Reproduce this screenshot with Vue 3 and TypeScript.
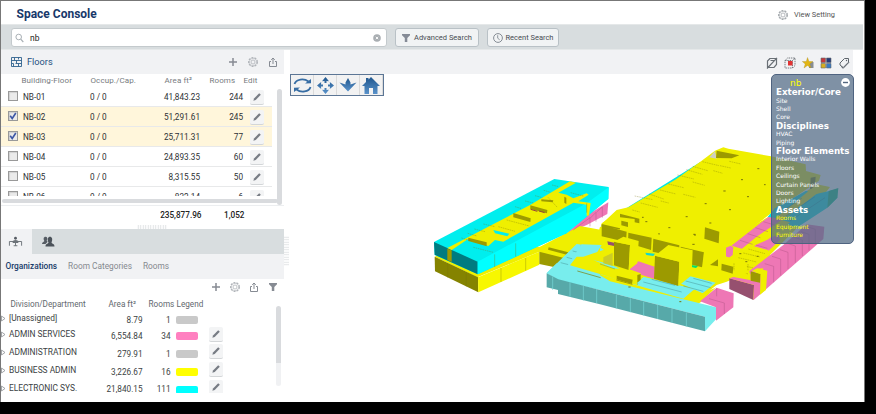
<script setup lang="ts">
interface Floor { name: string; area: string; rooms: string; checked: boolean }
interface Dept { name: string; area: string; rooms: string; color: string; edit: boolean }

const floors: Floor[] = [
  { name: 'NB-01', area: '41,843.23', rooms: '244', checked: false },
  { name: 'NB-02', area: '51,291.61', rooms: '245', checked: true },
  { name: 'NB-03', area: '25,711.31', rooms: '77', checked: true },
  { name: 'NB-04', area: '24,893.35', rooms: '60', checked: false },
  { name: 'NB-05', area: '8,315.55', rooms: '50', checked: false },
  { name: 'NB-06', area: '832.14', rooms: '6', checked: false },
]

const depts: Dept[] = [
  { name: '[Unassigned]', area: '8.79', rooms: '1', color: '#c9c9c9', edit: false },
  { name: 'ADMIN SERVICES', area: '6,554.84', rooms: '34', color: '#ff80c0', edit: true },
  { name: 'ADMINISTRATION', area: '279.91', rooms: '1', color: '#c9c9c9', edit: true },
  { name: 'BUSINESS ADMIN', area: '3,226.67', rooms: '16', color: '#ffff00', edit: true },
  { name: 'ELECTRONIC SYS.', area: '21,840.15', rooms: '111', color: '#00ffff', edit: true },
]

const layers = [
  { title: 'Exterior/Core', items: ['Site', 'Shell', 'Core'], on: false },
  { title: 'Disciplines', items: ['HVAC', 'Piping'], on: false },
  { title: 'Floor Elements', items: ['Interior Walls', 'Floors', 'Ceilings', 'Curtain Panels', 'Doors', 'Lighting'], on: false },
  { title: 'Assets', items: ['Rooms', 'Equipment', 'Furniture'], on: true },
]

// Shapes are listed back to front as [fill, points].
type Shape = [string, string]
const Y = '#efef00', YD = '#9c9a00', P = '#ee77b5', PD = '#96506f', C = '#78eded', CD = '#57a9a9'

const mainBlock: Shape[] = [
  ['#00e5e5', '80,234 300,97 305,110 120,230'],
  [Y, '5,282 50,240 85,232 228,148 305,92 345,62 370,52 385,56 513,79 617,103 618,123 662,135 657,152 513,250 410,330 400,400 100,380 5,310'],
  ['#cfcfc0', '328,82 345,63 350,86'],
  [YD, '350,62 418,76 395,85 348,84'],
  [YD, '48,248 118,266 118,280 104,277 104,267 48,260'],
  [YD, '64,272 84,277 84,291 64,286'],
]

const eastWing: Shape[] = [
  [Y, '60,300 215,210 350,118 390,126 300,240 210,330 200,400 160,464 90,400 0,420 0,330'],
  ['#7d8000', '332,98 347,95 344,136 330,132'],
  ['#00e5e5', '203,216 225,190 318,137 345,146 232,222 210,218'],
  ['#00e5e5', '345,148 388,138 412,132 412,158 382,188 290,248 245,232 228,240'],
  ['#00c080', '386,138 415,129 412,158 382,188'],
  [Y, '348,120 388,128 350,146 228,240 170,290 150,282 250,200'],
  [P, '94,302 205,216 250,222 180,272 128,312'],
  [P, '78,308 92,302 100,307 98,330 78,345'],
  [P, '160,305 190,282 235,270 240,285 205,318'],
  [P, '148,378 250,300 320,238 373,245 370,282 160,466 190,370 165,372 150,388'],
  [Y, '60,365 170,275 245,225 270,232 205,283 160,303 206,316 148,375 140,400 60,400'],
  [YD, '66,358 100,366 97,386 64,376'],
  [Y, '66,358 78,348 105,352 100,366'],
]

const courtyard: Shape[] = [
  [Y, '-20,95 0,20 300,60 350,100 440,130 440,160 380,185 350,195 280,250 0,180'],
  [YD, '5,15 80,35 78,66 5,49'],
  [YD, '85,38 155,53 153,90 84,69'],
  [YD, '160,56 238,76 236,112 158,95'],
  [YD, '242,80 312,97 306,142 240,125'],
  [YD, '315,22 358,35 356,70 313,56'],
  [YD, '365,131 400,140 398,161 364,151'],
  [YD, '330,135 354,118 354,139'],
  [Y, '312,92 322,97 318,142 310,140'],
  [P, '90,140 115,124 164,140 164,177 90,154'],
  [PD, '22,64 42,68 42,78 24,74'],
  ['#12d8d0', '136,98 165,101 160,108 139,105'],
  ['#00e070', '274,135 294,138 288,144 274,141'],
  [C, '-100,140 -55,73 5,75 -20,115 50,142 72,155 45,176 70,190 110,190 130,172 285,208 260,236 230,240 -30,180'],
  [C, '0,82 12,90 0,110'],
  [Y, '-70,110 -50,110 10,90 35,100 38,135 0,125 -20,120 40,145 95,150 122,160 122,186 110,195 45,178 10,165 -90,136'],
  ['#cccc28', '10,112 38,98 38,138 10,130'],
  [YD, '50,167 98,179 96,192 50,180'],
  [YD, '112,165 122,162 122,185 112,194'],
  [C, '110,190 132,171 285,208 248,236'],
  [C, '240,190 268,168 347,188 308,220'],
  [Y, '0,162 48,178 110,196 250,236 280,210 306,220 345,204 350,200 300,248 280,254 0,183'],
  [YD, '42,65 90,75 86,150 42,136'],
  [Y, '42,65 70,50 116,63 112,130 86,150 90,75'],
  [YD, '165,107 238,125 235,198 162,176'],
  [Y, '165,107 205,75 278,91 275,166 235,198 238,125'],
  [C, '-160,159 -130,130 -60,150 0,166 30,184 348,262 348,298 315,334 315,290 0,210 -120,182'],
  [CD, '-160,160 -125,178 0,210 315,290 315,334 0,253 -126,222 -126,210 -160,202'],
  [P, '300,244 350,203 401,220 400,262 348,302 348,262'],
  [PD, '388,175 462,195 460,240 388,207'],
  [P, '388,175 400,171 479,185 478,222 460,240 462,195'],
  [P, '452,150 468,146 468,180 452,178'],
  [YD, '452,154 482,162 480,188 452,182'],
  [Y, '455,153 472,145 502,152 498,210 480,224 482,162'],
]

const westWing: Shape[] = [
  [P, '440,190 510,130 565,97 562,132 500,165'],
  [Y, '44,260 120,230 360,230 480,168 545,180 600,210 600,280 450,305 358,245 172,322'],
  ['#858300', '44,260 174,322 175,367 45,304'],
  ['#f7f700', '174,322 358,245 358,284 175,367'],
  [YD, '358,245 432,264 405,292 358,282'],
  [YD, '386,232 445,247 443,255 384,239'],
  [C, '380,310 470,222 550,234 555,248 500,300 600,330 600,370 415,330'],
  [C, '510,298 535,275 600,292 600,320'],
  [Y, '446,296 460,286 480,292 565,242 580,252 505,298 600,326 600,342 470,305'],
  [YD, '545,182 600,195 600,220 546,206'],
  [Y, '545,160 570,143 587,146 587,128 600,120 600,200 545,182'],
  [YD, '545,162 600,175 600,220 546,206'],
  [PD, '562,212 584,217 584,225 563,222'],
  [YD, '583,220 600,210 600,290 583,284'],
  ['#00eeee', '42,216 403,27 566,51 565,87 440,190 174,313 44,255'],
  ['#007b80', '42,216 173,275 173,313 44,254'],
  ['#00ffff', '173,275 500,100 566,52 565,86 440,189 173,313'],
  [Y, '82,234 215,165 330,105 450,34 468,38 415,68 440,74 460,85 500,70 506,74 475,94 512,99 507,136 500,138 500,104 460,98 250,215 225,210 205,228 143,208 95,240'],
  [YD, '82,236 95,241 95,276 82,270'],
  [YD, '145,203 200,217 200,229 145,213'],
  [YD, '280,129 332,145 331,156 280,142'],
  [YD, '331,106 382,120 381,130 331,117'],
  [YD, '364,88 400,91 398,97 364,94'],
  [YD, '433,80 439,83 439,102 433,98'],
  ['#00eeee', '220,180 268,191 262,199 225,190'],
]
</script>

<template>
  <div class="app">
    <svg class="defs" width="0" height="0">
      <defs>
        <symbol id="gear" viewBox="0 0 12 12"><circle cx="6" cy="6" r="4.4" fill="none" stroke="currentColor" stroke-width="1.2" stroke-dasharray="2 1.1" /><circle cx="6" cy="6" r="3.7" fill="none" stroke="currentColor" stroke-width=".6" /><circle cx="6" cy="6" r="2" fill="none" stroke="currentColor" stroke-width=".8" /></symbol>
        <symbol id="share" viewBox="0 0 12 12"><path d="M4 5.500H2.500v5h7v-5H8M6 8V2M4.200 3.800 6 2l1.800 1.800" fill="none" stroke="currentColor" stroke-width="1" /></symbol>
        <symbol id="plus" viewBox="0 0 12 12"><path d="M6 2v8M2 6h8" stroke="currentColor" stroke-width="1.5" /></symbol>
        <symbol id="funnel" viewBox="0 0 12 12"><path d="M2 2h8v1.2L7.3 6v4H4.8V6L2 3.2z" fill="currentColor" /></symbol>
        <symbol id="pencil" viewBox="0 0 12 12"><path d="M2.4 9.7 3 7.4 8.2 2.3l1.6 1.5L4.700 9z" fill="currentColor" /></symbol>
        <linearGradient id="blue" x1="0" y1="0" x2="0" y2="1"><stop offset="0" stop-color="#1f568d" /><stop offset="1" stop-color="#5a93cb" /></linearGradient>
      </defs>
    </svg>

    <header class="top">
      <h1>Space Console</h1>
      <div class="view-setting"><svg width="12" height="12"><use href="#gear" /></svg><span>View Setting</span></div>
    </header>

    <div class="search-bar">
      <div class="search">
        <svg width="9" height="10" viewBox="0 0 9 10"><circle cx="3.700" cy="4" r="2.8" fill="none" stroke="#a9b0b5" /><path d="m5.700 6.200 2.600 2.800" stroke="#a9b0b5" stroke-width="1.200" /></svg>
        <span class="query">nb</span>
        <svg width="8" height="8" viewBox="0 0 8 8"><circle cx="4" cy="4" r="3.800" fill="#a9aeb2" /><path d="m2.800 2.800 2.400 2.400m0-2.400L2.800 5.200" stroke="#fff" stroke-width=".9" /></svg>
      </div>
      <button class="btn adv"><svg width="12" height="12"><use href="#funnel" /></svg><span>Advanced Search</span></button>
      <button class="btn rec"><svg width="10" height="10" viewBox="0 0 10 10"><circle cx="5" cy="5" r="4.400" fill="none" stroke="#858c94" /><path d="M4.700 2.200v3l2 1.600" fill="none" stroke="#858c94" stroke-width=".9" /></svg><span>Recent Search</span></button>
    </div>

    <div class="body">
      <aside class="left">
        <div class="panel-head">
          <svg width="11" height="10" viewBox="0 0 11 10"><path d="M.5.500h10v9H.5zM.5 3.500h10M.5 6.500h2m2 0h6M3.500.5v3m4-3v2M5.500 3.500v3M2.500 9.500v-3M7.500 9.500v-3" fill="none" stroke="#2f628f" stroke-width=".9" /></svg>
          <h2>Floors</h2>
          <div class="actions floors-actions"><svg><use href="#plus" /></svg><svg class="light"><use href="#gear" /></svg><svg><use href="#share" /></svg></div>
        </div>

        <div class="floor-head"><span>Building-Floor</span><span>Occup./Cap.</span><span>Area ft²</span><span>Rooms</span><span>Edit</span></div>
        <div class="floor-area">
          <div class="floor-rows">
            <div v-for="f in floors" :key="f.name" class="floor-row" :class="{ selected: f.checked }">
              <i class="check"><svg v-if="f.checked" width="8" height="8" viewBox="0 0 8 8"><path d="M1.200 3.700 3.200 6.500 6.800 1" fill="none" stroke="#3d57a5" stroke-width="1.600" /></svg></i>
              <span>{{ f.name }}</span><span>0 / 0</span><span class="num">{{ f.area }}</span><span class="num">{{ f.rooms }}</span>
              <i class="edit"><svg width="12" height="12"><use href="#pencil" /></svg></i>
            </div>
          </div>
          <i class="vscroll" />
        </div>
        <i class="hscroll" />
        <div class="totals"><span>235,877.96</span><span>1,052</span></div>
        <div class="grip" />

        <nav class="icon-tabs">
          <span class="active"><svg width="15" height="11" viewBox="0 0 16 11"><path d="M1.500 10V5.500h13V10M6 10h4M8 7v3" fill="none" stroke="#6c7278" /><circle cx="8" cy="2" r="1.500" fill="#555b62" /><path d="M5 7V5q3-2 6 0v2z" fill="#6c7278" /></svg></span>
          <span><svg width="14" height="11" viewBox="0 0 14 11"><path d="M1 8c0-2 2-2 2.400-3C2 3 2.700.800 4.500.800s2.400 2 1.200 4l1 1L4.500 8z" fill="#555c64" /><path d="M4.500 10.500c0-3 2.600-2.500 3-4C5.800 3 7 .800 9 .800s3 2.300 1.500 5.700c.4 1.500 3 1 3 4z" fill="#4b525a" /></svg></span>
        </nav>
        <nav class="sub-tabs"><span class="active">Organizations</span><span>Room Categories</span><span>Rooms</span></nav>
        <div class="actions org-actions"><svg><use href="#plus" /></svg><svg class="light"><use href="#gear" /></svg><svg><use href="#share" /></svg><svg><use href="#funnel" /></svg></div>
        <div class="org-head"><span>Division/Department</span><span>Area ft²</span><span>Rooms</span><span>Legend</span></div>
        <div class="org-area">
          <div class="org-rows">
            <div v-for="d in depts" :key="d.name" class="org-row">
              <svg width="5" height="7" viewBox="0 0 5 7"><path d="M.5 1 4 3.500.500 6z" fill="none" stroke="#8b8f93" stroke-width=".8" /></svg>
              <span class="dept">{{ d.name }}</span><span class="num">{{ d.area }}</span><span class="num">{{ d.rooms }}</span>
              <i class="swatch" :style="{ background: d.color }" />
              <i v-if="d.edit" class="edit"><svg width="12" height="12"><use href="#pencil" /></svg></i>
            </div>
          </div>
          <i class="org-scroll" />
        </div>
      </aside>

      <div class="splitter"><i /></div>

      <main class="viewer">
        <div class="viewer-bar">
          <svg viewBox="0 0 12 12"><path d="M1.500 4 4 1.500h6.500v6L8 10.500H1.500zM1.500 4 4 1.500M4.500 3.500H8M1 11.500 11 .800" fill="none" stroke="#6a7076" stroke-width="1.200" /></svg>
          <svg viewBox="0 0 12 12"><path d="M1 3.500 3.500 1h7.500v7.500L8.500 11H1zM1 3.500h7.500V11M8.500 3.500 11 1" fill="none" stroke="#787d82" stroke-dasharray="1.500 .8" /><path d="M4 4h4.500v4.500H4z" fill="#e13333" /></svg>
          <svg viewBox="0 0 12 12"><path d="M7 5h4.500v6H7z" fill="#888e93" /><path d="m5.500.500 1.500 4H11L7.700 7 9 11 5.500 8.500 2 11l1.200-4L.3 4.500h4z" fill="#e2b514" stroke="#9f8422" stroke-width=".3" /></svg>
          <svg viewBox="0 0 12 12"><path d="M1 1h4.500v4.500H1z" fill="#c4383b" /><path d="M6.500 1H11v4.500H6.500z" fill="#273b77" /><path d="M1 6.500h4.500V11H1z" fill="#d6ad20" /><path d="M6.500 6.500H11V11H6.500z" fill="#377ac4" /><path d="M1 1h4.500v4.500H1zM6.500 1H11v4.500H6.500zM1 6.500h4.500V11H1zM6.500 6.500H11V11H6.500z" fill="none" stroke="#62686e" stroke-width=".6" /></svg>
          <svg viewBox="0 0 12 12"><path d="M2 6 6.500 1.500H10.500V5.200L5.200 10.500 2 8zM3 9.300l2.200 2 5.800-6" fill="none" stroke="#5d646b" /><circle cx="8.500" cy="3.500" r=".7" fill="#5d646b" /></svg>
        </div>
        <div class="nav-tools">
          <span><svg width="19" height="17" viewBox="0 0 19 17"><path d="M1.500 7C3 2 11 1 15.500 4.500M17.500 10C16 15 8 16 3.500 12.500" fill="none" stroke="#376da4" stroke-width="1.800" /><path d="m12 6.500 6-.2V2zM7 10.500l-6 .2V15z" fill="#376da4" /></svg></span>
          <span><svg width="17" height="17" viewBox="0 0 17 17"><path d="M8.500 0 12 4.200 9.500 4v2h-2V4L5 4.200zM8.500 17 5 12.800l2.500.2v-2h2v2l2.500-.2zM0 8.500 4.200 5 4 7.500h2v2H4l.2 2.500zM17 8.500 12.800 12l.2-2.500h-2v-2h2l-.2-2.500z" fill="url(#blue)" /></svg></span>
          <span><svg width="18" height="16" viewBox="0 0 18 16"><path d="M9 1 11.500 5.500v2L17.500 5.500 9 14.500 .500 5.500l6 2v-2z" fill="url(#blue)" /></svg></span>
          <span><svg width="18" height="17" viewBox="0 0 18 17"><path d="M9 0 18 9h-2.500v8H11v-6H7v6H2.500V9H0L4 5V1h2.500v1.500z" fill="url(#blue)" /></svg></span>
        </div>

        <svg class="model" viewBox="290 74 574 328">
          <g transform="translate(600 130) scale(.33333)">
            <polygon v-for="(s, i) in mainBlock" :key="i" :fill="s[0]" :points="s[1]" />
            <path d="M104 198l55 11M122 219l51 13M147 192l44 15M180 180l48 12M205 162l46 11M232 135l50 12M259 119l48 14M278 109l45 13M307 95l50 12M182 213l24 6M97 240l22 6M278 156l36 10M340 122l28 8M250 193l36 9M360 107l32 7M388 94l35 8" class="seams dashed" />
            <path d="M370 183h7M423 149h6M314 221h6M387 239h6M441 200h6M492 164h5M472 116h6M257 260h6M328 279h6M205 293h6M174 312h6M136 275h6M280 313h6M126 262h5" class="dots" />
          </g>
          <g transform="translate(700 145) scale(.33333)">
            <polygon v-for="(s, i) in eastWing" :key="i" :fill="s[0]" :points="s[1]" />
            <path d="M194 356l27 8v48M216 334l26 8v50M240 314l24 8v50M262 295l24 8v50M283 277l24 8v48M303 260l24 8v48M322 245l24 8v46M120 286l38 12M143 266l38 12M166 248l38 12M190 230l36 11M168 300l34 10" class="pink-seams" />
            <path d="M85 370l60 17M100 354l60 15M115 338l55 13M130 324l50 12M145 312l50 14" class="seams dashed" />
            <path d="M136 350h6M170 334h6M118 326h6M105 380h6" class="dots" />
            <path d="M245 200l60-40M255 215l90-60M270 228l105-70" stroke="#009aa8" stroke-width="2" fill="none" />
          </g>
          <g transform="translate(420 170) scale(.33333)">
            <polygon v-for="(s, i) in westWing" :key="i" :fill="s[0]" :points="s[1]" />
            <path d="M243 294v42M317 264v38M83 281v42M139 310v40M224 253v38M287 220v40M500 100v28" class="seams" />
            <path d="M160 232l60 15M124 204l30 8M143 190l28 8M163 177l32 8M190 162l35 8M235 170l50 14M260 150l68 18M285 110l20 6M315 93l25 6M345 77l22 6M371 61l21 6M396 45l20 5M452 68l38 10M384 82l28 30" class="seams dashed" />
            <path d="M332 118l20 6M357 123l17 5" stroke="#98403c" stroke-width="3" />
            <path d="M422 278l55 14M399 293l48 14M440 262l66 17M458 243l52 13M482 228l40 10M530 286l60 15M484 270l22-3v12z" class="cyan-seams" />
            <path d="M460 180l50-37v26M510 145l18-18v28M530 126l17-15v32" class="pink-seams" />
          </g>
          <g transform="translate(600 220) scale(.33333)">
            <polygon v-for="(s, i) in courtyard" :key="i" :fill="s[0]" :points="s[1]" />
            <path d="M49 224v42M91 235v42M131 245v42M173 255v42M216 266v42M259 277v43M-50 196v46M-90 187v43M-10 207v42M-142 170v40" stroke="#79dada" stroke-width="2" />
            <path d="M0 132l45 15M130 186l115 30M155 178l70 18M257 183l75 20M280 175l55 15M250 198l60 16" class="cyan-seams" />
            <path d="M402 130v22M444 132v20" class="seams dashed" />
            <path d="M327 236l46 13v33M350 204v25" class="pink-seams" />
            <path d="M85 201h7M238 245h6M277 73h7M282 45h6" class="dots" />
            <path d="M49 180l48 13M-68 153l70 20" stroke="#7d7900" stroke-width="2" />
          </g>
        </svg>

        <div class="layers">
          <div class="layers-top"><b>nb</b><svg width="9" height="9" viewBox="0 0 9 9"><circle cx="4.500" cy="4.500" r="4.400" fill="#fff" /><path d="M2 4.500h5" stroke="#53677f" stroke-width="1.400" /></svg></div>
          <section v-for="g in layers" :key="g.title" :class="{ on: g.on }">
            <h3>{{ g.title }}</h3>
            <p v-for="item in g.items" :key="item">{{ item }}</p>
          </section>
        </div>
      </main>
    </div>
  </div>
</template>

<style>
body { background: #000; }
</style>

<style scoped>
* { box-sizing: border-box; }
.app { width: 865px; height: 402px; overflow: hidden; background: #fff; border: 1px solid #777; border-bottom: 0; font-family: Roboto, "Liberation Sans", sans-serif; font-size: 8.5px; color: #333; line-height: 12px; }
svg { display: block; flex: none; }
.defs { position: absolute; }
i { display: block; flex: none; }
h1, h2, h3, p { margin: 0; }
.top { height: 23px; display: flex; align-items: center; justify-content: space-between; padding: 2px 29px 0 15.5px; }
h1 { font-size: 12px; font-weight: 700; color: #17386a; }
.view-setting { display: flex; align-items: center; gap: 5px; color: #555; font-size: 7.4px; padding-top: 3px; }
.view-setting svg { color: #a5aaae; }
.search-bar { height: 26px; background: #d8dddf; border-top: 1px solid #e5e8e9; border-bottom: 1px solid #e5e8e9; margin-right: 1px; padding: 3px 0 0 10px; display: flex; }
.search { width: 376px; height: 19px; background: #fff; border: 1px solid #c4cacd; border-radius: 3px; display: flex; align-items: center; padding: 0 5px 0 3px; }
.query { flex: 1; padding-left: 6px; font-size: 8.5px; color: #222; }
.btn { height: 19px; padding: 0; border: 1px solid #b9c1c6; border-radius: 3px; background: #f1f3f4; color: #484d53; font: 7.5px Roboto, sans-serif; display: flex; align-items: center; white-space: nowrap; }
.adv { width: 84px; margin-left: 8px; padding-left: 4px; gap: 2px; }
.adv svg { color: #858b96; }
.rec { width: 72px; margin-left: 8px; padding-left: 5px; gap: 2.5px; }
.body { display: flex; height: 352px; }
.left { width: 283px; height: 352px; display: flex; flex-direction: column; flex: none; }
.panel-head { height: 24px; background: #f1f2f4; display: flex; align-items: center; padding: 0 5px 0 10px; flex: none; }
h2 { font-size: 9.2px; font-weight: 400; color: #245182; margin-left: 5px; flex: 1; }
.actions { display: flex; color: #868b93; }
.actions svg { width: 12px; height: 12px; }
.actions .light { color: #b0b4b9; }
.floors-actions { gap: 8px; }
.floor-head { height: 13px; flex: none; display: grid; grid-template-columns: 69px 74px 45px 34px 30px; padding: .6px 0 0 20.5px; color: #777b80; font-size: 8px; letter-spacing: .1px; white-space: nowrap; }
.floor-area { height: 111px; flex: none; display: flex; }
.floor-rows { width: 271px; height: 109px; overflow: hidden; }
.floor-row { height: 20px; border-bottom: 1px solid #e8e9ea; display: grid; grid-template-columns: 15px 67px 65px 45px 43px 7px 15px; padding: 1px 0 0 7px; align-items: center; font-size: 8.2px; color: #2e3135; }
.floor-row.selected { background: #fff6db; }
.num { text-align: right; }
.check { width: 10px; height: 10px; border: 1px solid #999; background: #eaeaea; box-shadow: inset 1px 1px 1px #d0d0d0; margin-bottom: 2px; }
.edit { width: 14px; height: 15px; border-radius: 2px; background: #f3f4f5; border-bottom: 1px solid #d3d6d8; color: #777c84; padding: 1px; }
.floor-row .edit { grid-column: 7; }
.vscroll { width: 5px; height: 116px; margin: 2px 0 0 5px; border-radius: 3px; background: #d9dbde; }
.hscroll { height: 4px; width: 276px; margin: 1px 0 2px 1px; background: #d9dbde; border-radius: 2px; }
.totals { height: 20px; border-top: 1px solid #eceef0; display: grid; grid-template-columns: 200.5px 43px; text-align: right; color: #222; font-size: 8.2px; font-weight: 500; align-items: center; flex: none; padding-bottom: 2px; }
.grip { width: 30px; height: 4px; margin-left: 136px; flex: none; background: radial-gradient(circle, #dfe2e4 .7px, transparent 1px) 0 0 / 2.5px 2px; }
.icon-tabs { height: 25px; background: #d8dddf; display: flex; flex: none; }
.icon-tabs span { width: 31px; display: flex; align-items: center; justify-content: center; }
.icon-tabs .active { background: #f1f2f4; padding-right: 2px; }
.sub-tabs { height: 25px; flex: none; background: #f1f2f4; display: flex; gap: 11px; padding: 6px 4.500px; color: #85898f; font-size: 8.3px; }
.sub-tabs .active { color: #183b69; font-weight: 500; }
.org-actions { gap: 7px; height: 19px; padding: 2px 5px 0; justify-content: flex-end; flex: none; }
.org-head { height: 13px; flex: none; display: grid; grid-template-columns: 98px 40px 28px 30px; padding-left: 9.500px; font-size: 8.2px; color: #63686e; white-space: nowrap; }
.org-area { display: flex; height: 82px; flex: none; }
.org-rows { width: 275px; height: 82px; overflow: hidden; }
.org-row { height: 18px; display: grid; grid-template-columns: 8px 90px 43.500px 28px 5px 22px 10px 15px; align-items: center; font-size: 8.4px; color: #3b3f43; white-space: nowrap; margin-top: -.2px; }
.org-row:first-child { height: 15px; }
.dept { margin-top: -1px; }
.org-row .num { padding-top: 2.500px; font-size: 8.2px; }
.swatch { grid-column: 6; height: 8px; border-radius: 2px; margin-top: 3px; }
.org-row .edit { grid-column: 8; margin: -1px 0 0 1px; }
.org-scroll { width: 5px; height: 80px; border-radius: 3px; margin-top: -5px; background: linear-gradient(#d9dbde 0 57px, #f0f1f3 57px); }
.splitter { width: 6px; flex: none; padding-top: 186px; }
.splitter i { width: 5px; height: 30px; background: radial-gradient(circle, #e1e3e5 .7px, transparent 1px) 0 0 / 2px 2.5px; }
.viewer { width: 574px; position: relative; }
.viewer-bar { width: 563px; height: 24px; background: #f1f2f4; display: flex; align-items: center; justify-content: flex-end; gap: 6px; padding: 2px 3px 0; }
.viewer-bar svg { width: 12px; height: 12px; }
.nav-tools { position: absolute; left: 0; top: 24px; z-index: 2; width: 94px; height: 22px; border: 1px solid #5c7695; background: #f2f2f2; display: grid; grid-template-columns: repeat(4, 1fr); }
.nav-tools span { display: flex; align-items: center; justify-content: center; border-right: 1px solid #dadada; }
.model { position: absolute; left: 0; top: 24px; width: 574px; height: 328px; }
.seams { fill: none; stroke: #77740a; stroke-width: 1.5; opacity: .65; }
.dashed { stroke-dasharray: 5 2; }
.dots { stroke: #77740a; stroke-width: 3; }
.pink-seams { fill: none; stroke: #b55689; stroke-width: 1.4; }
.cyan-seams { fill: none; stroke: #448e91; stroke-width: 1.4; }
.layers { position: absolute; left: 481px; top: 24px; width: 83px; height: 170px; border: 1px solid #4f6380; border-radius: 5px; background: rgba(82, 106, 134, .74); color: #fff; padding: 3px 2px 0 4px; font-family: "DejaVu Sans", sans-serif; white-space: nowrap; }
.layers-top { display: flex; justify-content: space-between; padding: 0 1px 0 14px; height: 10px; }
.layers-top b { font-size: 9px; font-weight: 400; line-height: 10px; color: #ff0; }
h3 { height: 8.5px; line-height: 9px; font-size: 8.7px; font-weight: 700; }
p { height: 8.4px; line-height: 8.2px; font-size: 6px; }
section.on p { color: #ff0; }
</style>
